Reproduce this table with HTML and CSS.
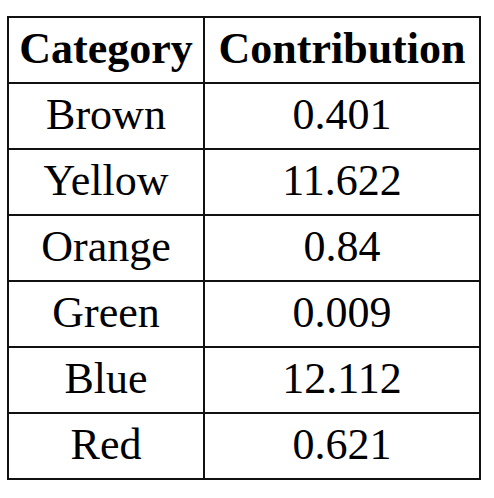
FILE: index.html
```html
<!DOCTYPE html>
<html lang="en">

<head>
    <meta charset="UTF-8">
    <meta name="viewport" content="width=device-width, initial-scale=1.0">
    <title>Contribution</title>
    <link rel="stylesheet" href="styles.css">
</head>

<body>
    <table class="data">
        <thead>
            <tr>
                <th class="col-cat">Category</th>
                <th class="col-val">Contribution</th>
            </tr>
        </thead>
        <tbody>
            <tr><td>Brown</td><td>0.401</td></tr>
            <tr><td>Yellow</td><td>11.622</td></tr>
            <tr><td>Orange</td><td>0.84</td></tr>
            <tr><td>Green</td><td>0.009</td></tr>
            <tr><td>Blue</td><td>12.112</td></tr>
            <tr><td>Red</td><td>0.621</td></tr>
        </tbody>
    </table>
</body>

</html>
```

FILE: styles.css
```css
* {
    margin: 0;
    padding: 0;
    box-sizing: border-box;
}

body {
    background: #fff;
    padding: 16px 0 0 7px;
    font-family: "Liberation Serif", "DejaVu Serif", serif;
    color: #000;
}

.data {
    border-collapse: collapse;
    width: 472px;
    table-layout: fixed;
}

.data th,
.data td {
    border: 2px solid #111;
    height: 66px;
    text-align: center;
    vertical-align: middle;
    font-size: 44px;
    line-height: 1;
    padding: 0 0 2px;
}

.data th {
    font-weight: bold;
}

.col-cat {
    width: 196px;
}

.col-val {
    width: 276px;
}
```
